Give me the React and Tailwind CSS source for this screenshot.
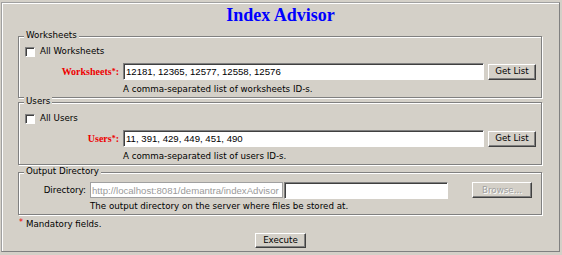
const ui = { fontFamily: '"DejaVu Sans", Verdana, sans-serif' }
const serif = { fontFamily: '"Liberation Serif", "Times New Roman", serif' }
const field = { fontFamily: '"Liberation Sans", Arial, sans-serif' }

function Group({ legend, className = '', children }) {
  return (
    <div className={`relative ml-[16px] w-[524px] border border-[#808080] shadow-[inset_1px_1px_0_#fff,1px_1px_0_#fff] ${className}`}>
      <span className="absolute left-[5px] top-[-7px] px-[2px] bg-[#d4d0c8] text-[8.7px] leading-[11px] text-black" style={ui}>
        {legend}
      </span>
      {children}
    </div>
  )
}

function Check({ label }) {
  return (
    <div className="flex items-center h-[11px] pl-[6px]">
      <span className="w-[10px] h-[10px] bg-white border border-t-[#808080] border-l-[#808080] border-r-white border-b-white shadow-[inset_1px_1px_0_#404040]" />
      <span className="ml-[5px] text-[8.7px] leading-[11px] text-black" style={ui}>{label}</span>
    </div>
  )
}

function Button({ children, className = '', disabled = false }) {
  return (
    <button
      className={`flex items-center justify-center bg-[#d4d0c8] border border-t-white border-l-white border-r-[#404040] border-b-[#404040] shadow-[inset_-1px_-1px_0_#808080] text-[8.7px] leading-none ${disabled ? 'text-[#a0a0a0] [text-shadow:1px_1px_0_#fff]' : 'text-black'} ${className}`}
      style={ui}
    >
      {children}
    </button>
  )
}

function Input({ value, className = '' }) {
  return (
    <input
      readOnly
      defaultValue={value}
      className={`h-[17px] bg-white px-[2px] border border-t-[#808080] border-l-[#808080] border-r-white border-b-white shadow-[inset_1px_1px_0_#404040] text-[9.6px] text-black outline-none ${className}`}
      style={field}
    />
  )
}

function IdRow({ label, value, note }) {
  return (
    <>
      <div className="flex items-center h-[17px] mt-[6px]">
        <div className="w-[104px] pr-[4px] text-right text-[10px] font-bold leading-none text-[#ee0000]" style={serif}>
          {label}
          <sup className="text-[8px] relative top-[-1px]">*</sup>:
        </div>
        <Input value={value} className="w-[361px]" />
        <Button className="ml-[4px] w-[48px] h-[16px]">Get List</Button>
      </div>
      <div className="pl-[104px] mt-[4px] text-[8.7px] leading-[10px] text-black" style={ui}>{note}</div>
    </>
  )
}

export default function App() {
  return (
    <div className="w-[562px] h-[255px] bg-[#d4d0c8] pt-[2px] pl-[1px]">
      <div className="w-[559px] h-[250px] border border-[#a0a0a0] border-r-[#808080] border-b-[#808080] shadow-[inset_1px_1px_0_#fff] flex flex-col">
        <div className="h-[33px] pt-[2px] text-center text-[18px] leading-[20px] font-bold text-[#0000ff]" style={serif}>
          Index Advisor
        </div>

        <Group legend="Worksheets" className="h-[62px] pt-[9px]">
          <Check label="All Worksheets" />
          <IdRow
            label="Worksheets"
            value="12181, 12365, 12577, 12558, 12576"
            note="A comma-separated list of worksheets ID-s."
          />
        </Group>

        <Group legend="Users" className="h-[63px] mt-[4px] pt-[10px]">
          <Check label="All Users" />
          <IdRow
            label="Users"
            value="11, 391, 429, 449, 451, 490"
            note="A comma-separated list of users ID-s."
          />
        </Group>

        <Group legend="Output Directory" className="h-[43px] mt-[7px] pt-[9px]">
          <div className="flex items-center h-[16px]">
            <div className="w-[71px] pr-[4px] text-right text-[8.7px] leading-none text-black" style={ui}>Directory:</div>
            <input
              readOnly
              defaultValue="http://localhost:8081/demantra/indexAdvisor"
              className="w-[193px] h-[16px] bg-white px-[1px] border border-[#a0a0a0] text-[9.6px] text-[#9a9a9a] outline-none"
              style={field}
            />
            <Input value="" className="w-[164px] h-[16px] ml-[1px]" />
            <Button disabled className="ml-[24px] w-[60px] h-[16px]">Browse...</Button>
          </div>
          <div className="pl-[71px] mt-[3px] text-[8.7px] leading-[10px] text-black" style={ui}>
            The output directory on the server where files be stored at.
          </div>
        </Group>

        <div className="mt-[4px] ml-[17px] flex items-start text-[8.7px] leading-[11px] text-black" style={ui}>
          <span className="text-[#ee0000] text-[8px] leading-[8px] mr-[3px]">*</span>
          Mandatory fields.
        </div>

        <Button className="mt-[3px] mx-auto w-[51px] h-[15px]">Execute</Button>
      </div>
    </div>
  )
}
